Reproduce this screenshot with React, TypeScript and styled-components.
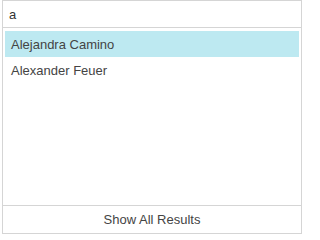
import React from "react";
import styled, { createGlobalStyle } from "styled-components";

const Global = createGlobalStyle`
  html, body { margin: 0; padding: 0; background: #ffffff; }
  body { font-family: "Liberation Sans", Arial, sans-serif; }
`;

const Panel = styled.div`
  box-sizing: border-box;
  margin-left: 2px;
  width: 300px;
  height: 234px;
  border: 1px solid #d5d5d5;
  display: flex;
  flex-direction: column;
  background: #fff;
`;

const SearchBox = styled.div`
  height: 26px;
  border-bottom: 1px solid #d5d5d5;
  display: flex;
  align-items: center;
  padding: 0 6px;
  font-size: 13px;
  color: #333;
`;

const List = styled.div`
  flex: 1;
  padding: 3px 2px;
  display: flex;
  flex-direction: column;
`;

const Row = styled.div<{ $active?: boolean }>`
  height: 26px;
  display: flex;
  align-items: center;
  padding: 0 6px;
  font-size: 13px;
  color: #444;
  background: ${(p) => (p.$active ? "#bde9f1" : "transparent")};
`;

const Footer = styled.div`
  height: 27px;
  border-top: 1px solid #d5d5d5;
  display: flex;
  align-items: center;
  justify-content: center;
  font-size: 13px;
  color: #444;
`;

const results = ["Alejandra Camino", "Alexander Feuer"];

export default function App() {
  return (
    <>
      <Global />
      <Panel>
        <SearchBox>a</SearchBox>
        <List>
          {results.map((r, i) => (
            <Row key={r} $active={i === 0}>
              {r}
            </Row>
          ))}
        </List>
        <Footer>Show All Results</Footer>
      </Panel>
    </>
  );
}
